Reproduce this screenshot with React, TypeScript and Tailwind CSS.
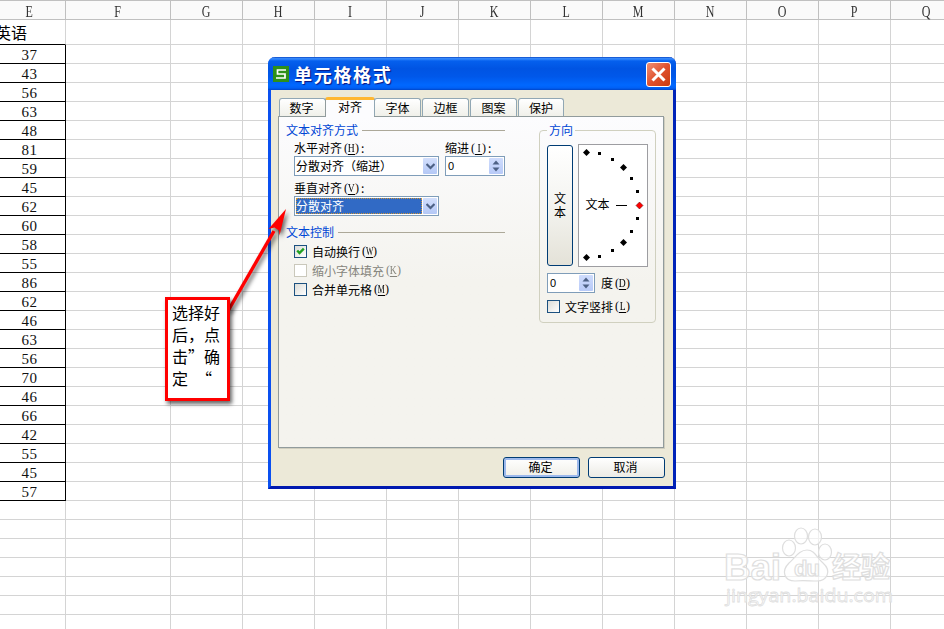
import { clsx } from "clsx";

const columns = ["F", "G", "H", "I", "J", "K", "L", "M", "N", "O", "P", "Q"];

const scores = [
	37, 43, 56, 63, 48, 81, 59, 45, 62, 60, 58, 55, 86, 62, 46, 63, 56, 70, 46,
	66, 42, 55, 45, 57,
];

const emptyRows = [0, 1, 2, 3, 4, 5, 6];

const tabs = ["数字", "对齐", "字体", "边框", "图案", "保护"];

// dots on the dial, every third one is a diamond
const dots = [
	[8, 8],
	[21, 9],
	[34, 15],
	[45, 23],
	[53, 34],
	[59, 47],
	[61, 61],
	[59, 74],
	[53, 87],
	[45, 98],
	[34, 106],
	[21, 112],
	[8, 113],
];

function ColumnName({ name }: { name: string }) {
	return (
		<span className="block scale-x-75 pr-px font-['Liberation_Serif',serif] text-base leading-[21px] text-[#333]">
			{name}
		</span>
	);
}

function EmptyCells() {
	return (
		<>
			{columns.map((name) => (
				<div
					key={name}
					className={clsx(
						"shrink-0 border-r border-b border-[#d4d4d4]",
						name === "F" ? "w-[105px]" : "w-[72px]",
					)}
				/>
			))}
		</>
	);
}

function Sheet() {
	return (
		<div className="-ml-1.5 flex w-[1100px] flex-col bg-white">
			<div className="flex h-5 border-t border-b border-[#c0c0c0] bg-[#fafafa]">
				<div className="w-[72px] border-r border-[#c0c0c0] text-center">
					<ColumnName name="E" />
				</div>
				{columns.map((name) => (
					<div
						key={name}
						className={clsx(
							"shrink-0 border-r border-[#c0c0c0] text-center",
							name === "F" ? "w-[105px]" : "w-[72px]",
						)}
					>
						<ColumnName name={name} />
					</div>
				))}
			</div>
			<div className="flex h-[25px]">
				<div className="w-[72px] border-r border-b border-r-[#d4d4d4] border-b-black pl-px text-base leading-[24px]">
					英语
				</div>
				<EmptyCells />
			</div>
			{scores.map((score, i) => (
				<div key={i} className="flex h-[19px]">
					<div className="w-[72px] border-r border-b border-black pt-0.5 text-center font-['Liberation_Serif',serif] text-[15px] leading-[17px] tracking-[0.5px] text-[#111]">
						{score}
					</div>
					<EmptyCells />
				</div>
			))}
			{emptyRows.map((row) => (
				<div key={row} className="flex h-[19px]">
					<div className="w-[72px] border-r border-b border-[#d4d4d4]" />
					<EmptyCells />
				</div>
			))}
		</div>
	);
}

function Key({ letter }: { letter: string }) {
	return (
		<span className="ml-[2px] inline-flex font-['Liberation_Serif',serif] leading-3">
			<span className="w-1">(</span>
			<span className="flex w-[7px] justify-center border-b border-current">
				<span
					className={/[WM]/.test(letter) ? "scale-x-[0.65]" : "scale-x-[0.8]"}
				>
					{letter}
				</span>
			</span>
			<span className="w-1">)</span>
		</span>
	);
}

function Chevron({ up }: { up?: boolean }) {
	return (
		<svg
			width="8"
			height="5"
			viewBox="0 0 8 5"
			className={clsx(up && "rotate-180")}
		>
			<path d="M.5 .5h7L4 4.5Z" fill="#4d6185" />
		</svg>
	);
}

function Select({ value, selected }: { value: string; selected?: boolean }) {
	return (
		<div className="flex h-5 w-[145px] border border-[#7f9db9] bg-white p-px">
			<div
				className={clsx(
					"flex-1 leading-4",
					selected &&
						"mr-px bg-[#316ac5] text-white outline outline-dotted outline-[#ce953a] -outline-offset-1",
				)}
			>
				{value}
			</div>
			<div className="flex w-[14px] items-center justify-center rounded-[1px] bg-gradient-to-b from-[#d3dffc] to-[#b4c8f6]">
				<svg width="9" height="7" viewBox="0 0 9 7">
					<path
						d="M.5 1 4.5 5 8.5 1"
						fill="none"
						stroke="#4d6185"
						strokeWidth="2.2"
					/>
				</svg>
			</div>
		</div>
	);
}

function Spinner({ className }: { className: string }) {
	return (
		<div
			className={clsx(
				"flex h-5 justify-between border border-[#7f9db9] bg-white p-px",
				className,
			)}
		>
			<span className="pl-px font-['Liberation_Sans',sans-serif] text-[11px] leading-4">
				0
			</span>
			<div className="flex w-[14px] flex-col items-center justify-between rounded-[1px] bg-gradient-to-b from-[#cfdcfc] to-[#b8caf8] py-[2px]">
				<Chevron up />
				<Chevron />
			</div>
		</div>
	);
}

function Checkbox({
	label,
	letter,
	checked,
	disabled,
}: {
	label: string;
	letter: string;
	checked?: boolean;
	disabled?: boolean;
}) {
	return (
		<div
			className={clsx(
				"flex h-[13px] items-center",
				disabled && "text-[#85847c]",
			)}
		>
			<div
				className={clsx(
					"mr-[5px] size-[13px] border",
					disabled
						? "border-[#cac8bb] bg-white"
						: "border-[#1c5180] bg-gradient-to-br from-[#dcdcd7] to-white",
				)}
			>
				{checked && (
					<svg width="11" height="11" viewBox="0 0 11 11">
						<path
							d="M2.2 4.500 4.500 7 8.800 2.700"
							fill="none"
							stroke="#21a121"
							strokeWidth="2.4"
						/>
					</svg>
				)}
			</div>
			{label}
			<Key letter={letter} />
		</div>
	);
}

function SectionTitle({ children }: { children: React.ReactNode }) {
	return (
		<div className="flex h-3 items-center gap-1 text-[#0046d5]">
			{children}
			<div className="h-px flex-1 bg-[#aca899]" />
		</div>
	);
}

function Dial() {
	return (
		<svg
			width="70"
			height="123"
			viewBox="0 0 70 123"
			className="bg-white outline outline-[#9d9da1] -outline-offset-1"
		>
			{dots.map(([x, y], i) =>
				i % 3 === 0 ? (
					<path
						key={i}
						d="M0-3.5 3.5 0 0 3.5-3.5 0Z"
						transform={`translate(${x + 0.5} ${y + 0.5})`}
						fill={i === 6 ? "#f00" : "#000"}
						stroke={i === 6 ? "#400" : "none"}
						strokeWidth=".5"
					/>
				) : (
					<rect key={i} x={x - 1} y={y - 1} width="3" height="3" />
				),
			)}
			<path d="M38 61.5h11" stroke="#000" />
			<text x="7.5" y="65" fontSize="12">
				文本
			</text>
		</svg>
	);
}

function Direction() {
	return (
		<fieldset className="h-[199px] w-[117px] rounded-[4px] border border-[#d0d0bf] px-[7px]">
			<legend className="px-[2px] leading-3 text-[#0046d5]">方向</legend>
			<div className="mt-[8px] flex gap-[5px]">
				<div className="mt-px flex h-[121px] w-[26px] items-center justify-center rounded-[3px] border border-[#003c74] bg-gradient-to-b from-white via-[#f4f4f0] to-[#e4e2d8] pb-0.5 leading-[14px]">
					<span className="w-3">文本</span>
				</div>
				<Dial />
			</div>
			<div className="mt-[6px] flex items-center gap-[6px]">
				<Spinner className="w-12" />
				<span className="flex items-center">
					度
					<Key letter="D" />
				</span>
			</div>
			<div className="mt-[7px]">
				<Checkbox label="文字竖排" letter="L" />
			</div>
		</fieldset>
	);
}

function AlignmentPanel() {
	return (
		<div className="flex h-[332px] w-[386px] justify-between border border-[#919b9c] bg-gradient-to-b from-[#fcfcfe] to-[#f4f3ee] to-50% pr-[7px] pl-[7px] shadow-[1px_1px_0_#d0cebf]">
			<div className="w-[219px] pt-[7px]">
				<SectionTitle>文本对齐方式</SectionTitle>
				<div className="flex gap-[6px] pt-[6px] pl-2">
					<div>
						<div className="mb-[2px] flex h-3 items-center">
							水平对齐
							<Key letter="H" />
							<span className="pl-0.5">:</span>
						</div>
						<Select value="分散对齐（缩进）" />
						<div className="mt-[6px] mb-[2px] flex h-3 items-center">
							垂直对齐
							<Key letter="V" />
							<span className="pl-0.5">:</span>
						</div>
						<Select value="分散对齐" selected />
					</div>
					<div>
						<div className="mb-[2px] flex h-3 items-center">
							缩进
							<Key letter="I" />
							<span className="pl-0.5">:</span>
						</div>
						<Spinner className="w-[60px]" />
					</div>
				</div>
				<div className="mt-[10px]">
					<SectionTitle>文本控制</SectionTitle>
				</div>
				<div className="flex flex-col gap-[6px] pt-[7px] pl-2">
					<Checkbox label="自动换行" letter="W" checked />
					<Checkbox label="缩小字体填充" letter="K" disabled />
					<Checkbox label="合并单元格" letter="M" />
				</div>
			</div>
			<div className="pt-[7px]">
				<Direction />
			</div>
		</div>
	);
}

function Dialog() {
	return (
		<div className="absolute top-[57px] left-[268px] flex h-[432px] w-[408px] flex-col rounded-t-[7px] border-[3px] border-t-0 border-[#0a50f0] border-r-[#0023b8] border-b-[#0019b0] bg-[#ece9d8] text-xs leading-3 text-black">
			<div className="-mx-[3px] flex h-[33px] shrink-0 items-center rounded-t-[7px] bg-[linear-gradient(180deg,#0a48c4_0%,#3a8eff_5%,#0560ee_12%,#0054e3_35%,#0058ea_60%,#0068ff_85%,#0060f5_94%,#0045c8_100%)] pr-[5px] pl-[5px]">
				<div className="flex size-4 items-center justify-center bg-[#2e9018]">
					<svg width="12" height="12" viewBox="0 0 12 12">
						<path
							d="M11 2H2.500v4h7.500v4H1"
							fill="none"
							stroke="#fff"
							strokeWidth="1.7"
						/>
					</svg>
				</div>
				<span className="ml-[5px] flex-1 text-[18px] leading-5 font-bold tracking-[1.7px] text-white [text-shadow:1px_1px_1px_#0a1883]">
					单元格格式
				</span>
				<div className="mt-0.5 flex size-[25px] items-center justify-center rounded-[3px] border border-white bg-gradient-to-br from-[#ee8f74] via-[#e0512d] to-[#c93a0c]">
					<svg width="17" height="17" viewBox="0 0 17 17">
						<path
							d="m2.5 2.5 12 12M14.5 2.5l-12 12"
							stroke="#fff"
							strokeWidth="3"
						/>
					</svg>
				</div>
			</div>
			<div className="px-[7px] pt-[7px]">
				<div className="relative -mb-px flex h-5 items-end pl-px">
					{tabs.map((tab) =>
						tab === "对齐" ? (
							<div
								key={tab}
								className="-mr-px -ml-[2px] h-5 w-[50px] rounded-t-[3px] border-x border-t-[3px] border-x-[#919b9c] border-t-[#ffb732] bg-[#fcfcfe] text-center leading-[14px]"
							>
								{tab}
							</div>
						) : (
							<div
								key={tab}
								className="mr-px mb-px h-[18px] w-[47px] rounded-t-[3px] border border-b-0 border-[#91a7b4] bg-gradient-to-b from-white to-[#f0f0ea] text-center leading-[17px] first:pr-0.5 last:w-[46px]"
							>
								{tab}
							</div>
						),
					)}
				</div>
				<AlignmentPanel />
				<div className="flex justify-end gap-2 pt-[9px] pr-px text-center leading-[18px]">
					<div className="h-[21px] w-[77px] rounded-[3px] border border-[#003c74] bg-gradient-to-b from-white to-[#f0efe8] pr-0.5 shadow-[inset_0_0_0_2px_#9db9ec]">
						确定
					</div>
					<div className="h-[21px] w-[77px] rounded-[3px] border border-[#003c74] bg-gradient-to-b from-white to-[#ecebe5] pr-0.5">
						取消
					</div>
				</div>
			</div>
		</div>
	);
}

function Callout() {
	return (
		<>
			<svg
				width="80"
				height="120"
				viewBox="0 0 80 120"
				className="absolute top-[200px] left-[220px] drop-shadow-[2px_3px_2px_rgba(0,0,0,0.6)]"
			>
				<path d="m8 111 46-80" stroke="#f00" strokeWidth="3.4" />
				<path d="M66 9 48.500 29l6-1.500 4.500 3 .5 5Z" fill="#f00" />
			</svg>
			<div className="absolute top-[297px] left-[165px] h-[104px] w-[65px] border-[3px] border-[#f00] bg-white pt-px pl-1 text-base leading-[22px] text-black shadow-[2px_3px_4px_rgba(0,0,0,0.6)]">
				<div>选择好</div>
				<div>后，点</div>
				<div className="flex">
					击<span className="w-4">”</span>确
				</div>
				<div className="flex gap-2">
					定<span>“</span>
				</div>
			</div>
		</>
	);
}

function Watermark() {
	return (
		<svg
			width="190"
			height="100"
			viewBox="0 0 190 100"
			className="absolute top-[515px] left-[714px] font-['Liberation_Sans','Noto_Sans_CJK_SC',sans-serif] font-bold"
			fill="#fff"
			fillOpacity=".65"
			stroke="#dedede"
			strokeWidth="1.2"
		>
			<text x="10" y="65" fontSize="37" textLength="57">
				Bai
			</text>
			<ellipse cx="75" cy="33" rx="6.5" ry="8" />
			<ellipse cx="87" cy="21" rx="6.5" ry="8" />
			<ellipse cx="101" cy="22" rx="6.5" ry="8" />
			<ellipse cx="111" cy="37" rx="6.5" ry="8" />
			<path d="M93 35c8 0 10 8 16 13 9 8 4 18-6 18-7 0-14-1-22 0-11 0-14-10-6-18 6-5 10-13 18-13Z" />
			<text x="80" y="61" fontSize="22" textLength="26">
				du
			</text>
			<text x="118" y="63" fontSize="29" textLength="58">
				经验
			</text>
			<text
				x="12"
				y="87"
				fontSize="19"
				textLength="167"
				strokeWidth=".8"
				lengthAdjust="spacingAndGlyphs"
				className="font-['Open_Sans',sans-serif] font-medium"
			>
				jingyan.baidu.com
			</text>
		</svg>
	);
}

export default function App() {
	return (
		<main className="relative h-[629px] w-[944px] overflow-hidden bg-white font-['Noto_Sans_CJK_SC',sans-serif]">
			<Sheet />
			<Watermark />
			<Dialog />
			<Callout />
		</main>
	);
}
